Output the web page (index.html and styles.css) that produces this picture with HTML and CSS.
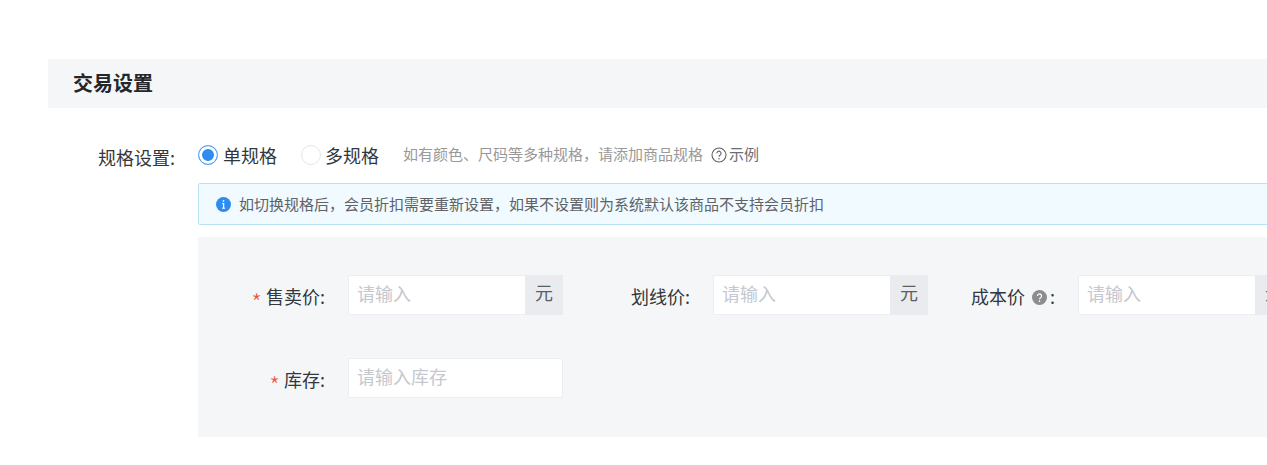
FILE: index.html
```html
<!DOCTYPE html>
<html lang="zh-CN">
<head>
<meta charset="utf-8">
<title>交易设置</title>
<link rel="stylesheet" href="styles.css">
</head>
<body>
<section class="section">
  <h2 class="section-title">交易设置</h2>
  <div class="spec-row">
    <div class="spec-label">规格设置:</div>
    <div class="spec-body">
      <div class="radio-line">
        <label class="radio radio-checked"><span class="radio-dot"></span><span>单规格</span></label>
        <label class="radio"><span class="radio-dot"></span><span>多规格</span></label>
        <span class="hint">如有颜色、尺码等多种规格，请添加商品规格</span>
        <a class="example">
          <svg class="example-icon" viewBox="0 0 16 16"><circle cx="8" cy="8" r="7" fill="none" stroke="#606266" stroke-width="1.1"/><path d="M5.9 6.3a2.1 2.1 0 1 1 3.3 1.7c-.8.5-1.2.9-1.2 1.8" fill="none" stroke="#606266" stroke-width="1.1"/><circle cx="8" cy="11.7" r=".75" fill="#606266"/></svg>
          <span>示例</span>
        </a>
      </div>
      <div class="alert">
        <svg class="alert-icon" viewBox="0 0 16 16"><circle cx="8" cy="8" r="8" fill="#2d8cf0"/><rect x="7.2" y="3.4" width="1.6" height="1.7" fill="#fff"/><path d="M6.5 6.4h2.3v5h1v1H6.4v-1h1v-4h-.9z" fill="#fff"/></svg>
        <span>如切换规格后，会员折扣需要重新设置，如果不设置则为系统默认该商品不支持会员折扣</span>
      </div>
      <div class="panel">
        <div class="field-grid">
          <div class="field">
            <div class="field-label"><span class="required">*</span>售卖价:</div>
            <div class="input-group"><input class="input" placeholder="请输入"><span class="addon">元</span></div>
          </div>
          <div class="field">
            <div class="field-label">划线价:</div>
            <div class="input-group"><input class="input" placeholder="请输入"><span class="addon">元</span></div>
          </div>
          <div class="field">
            <div class="field-label">成本价<svg class="help-icon" viewBox="0 0 16 16"><circle cx="8" cy="8" r="8" fill="#8c8c8c"/><path d="M5.8 6.4a2.2 2.2 0 1 1 3.4 1.8c-.8.5-1.2.8-1.2 1.6" fill="none" stroke="#fff" stroke-width="1.3"/><circle cx="8" cy="11.9" r=".85" fill="#fff"/></svg>:</div>
            <div class="input-group"><input class="input" placeholder="请输入"><span class="addon">元</span></div>
          </div>
          <div class="field">
            <div class="field-label"><span class="required">*</span>库存:</div>
            <div class="input-group"><input class="input input-full" placeholder="请输入库存"></div>
          </div>
        </div>
      </div>
    </div>
  </div>
</section>
</body>
</html>
```
FILE: styles.css
```css
* { box-sizing: border-box; }
html, body { margin: 0; height: 465px; overflow: hidden; background: #fff; }
body {
  padding: 59px 0 0 48px;
  font-family: "Noto Sans CJK SC", "Noto Sans", sans-serif;
  color: #2b2f36;
}
.section { width: 1400px; }
.section-title {
  margin: 0;
  height: 49px;
  padding-left: 25px;
  background: #f5f6f8;
  font-size: 20px;
  font-weight: 700;
  line-height: 47px;
  color: #23262b;
}
.spec-row { display: flex; padding-top: 34px; }
.spec-label {
  width: 150px;
  padding-right: 23px;
  text-align: right;
  font-size: 18px;
  line-height: 28px;
  padding-top: 1px;
  color: #33373d;
}
.spec-body { flex: 1; }
.radio-line { display: flex; align-items: center; height: 25px; }
.radio {
  display: flex;
  align-items: center;
  gap: 5px;
  margin-right: 25px;
  font-size: 18px;
  color: #33373d;
}
.radio-checked { margin-right: 24px; }
.radio-dot {
  width: 20px;
  height: 20px;
  border: 1px solid #e4e6e9;
  border-radius: 50%;
  background: #fff;
}
.radio-checked .radio-dot {
  border-color: #5fa6f2;
  background: #2d8cf0;
  box-shadow: inset 0 0 0 3px #fff;
}
.radio + .radio { gap: 4px; margin-right: 24px; }
.hint { padding-bottom: 2px; font-size: 15px; color: #999; }
.example {
  display: flex;
  align-items: center;
  gap: 2px;
  margin-left: 8px;
  padding-bottom: 2px;
  font-size: 15px;
  color: #6b6f75;
}
.example-icon { width: 16px; height: 16px; margin-top: 2px; }
.alert {
  display: flex;
  align-items: center;
  gap: 8px;
  height: 42px;
  margin-top: 16px;
  padding: 0 0 2px 17px;
  background: #f0faff;
  border: 1px solid #b9e2f5;
  border-radius: 2px;
  font-size: 15px;
  color: #606266;
}
.alert-icon { width: 15px; height: 15px; margin-top: 2px; }
.panel {
  margin-top: 12px;
  height: 200px;
  padding-top: 38px;
  background: #f5f6f8;
}
.field-grid { display: grid; grid-template-columns: repeat(3, 365px); row-gap: 43px; }
.field { display: flex; height: 40px; }
.field-label {
  display: flex;
  align-items: center;
  justify-content: flex-end;
  width: 150px;
  height: 42px;
  padding-right: 23px;
  font-size: 18px;
  color: #33373d;
}
.required {
  margin-right: 4px;
  padding-top: 11px;
  color: #e9573f;
  font-size: 24px;
  font-weight: 300;
  line-height: 1;
}
.help-icon { width: 15px; height: 15px; margin: 2px 3px 0 7px; }
.input-group { display: flex; width: 215px; height: 40px; }
.input {
  width: 177px;
  height: 40px;
  padding: 0 9px 4px 8px;
  border: 1px solid #eceef1;
  border-right: 0;
  border-radius: 2px 0 0 2px;
  background: #fff;
  font-family: inherit;
  font-size: 18px;
  outline: none;
}
.input::placeholder { color: #c5c8ce; opacity: 1; }
.input-full { width: 215px; border-right: 1px solid #eceef1; border-radius: 2px; }
.addon {
  display: flex;
  align-items: center;
  justify-content: center;
  width: 38px;
  height: 40px;
  padding-bottom: 7px;
  background: #e9ebee;
  font-size: 18px;
  color: #5a5e66;
}
```
